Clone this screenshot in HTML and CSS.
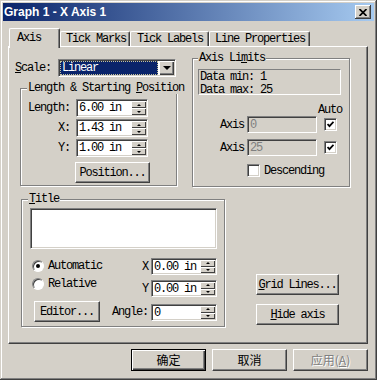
FILE: index.html
```html
<!DOCTYPE html>
<html lang="en">

<head>
    <meta charset="UTF-8">
    <meta name="viewport" content="width=device-width, initial-scale=1.0">
    <title>Graph 1 - X Axis 1</title>
    <link rel="stylesheet" href="styles.css">
</head>

<body>
    <div class="window">
        <div class="titlebar">
            <span class="title-text">Graph 1 - X Axis 1</span>
            <button class="close-btn">
                <svg width="8" height="7" viewBox="0 0 8 7"><path d="M0.5 0 L7.5 7 M7.5 0 L0.5 7" /></svg>
            </button>
        </div>

        <div class="tabs">
            <div class="tab active">Axis</div>
            <div class="tab tab-marks">Tick Marks</div>
            <div class="tab tab-labels">Tick Labels</div>
            <div class="tab tab-line">Line Properties</div>
        </div>

        <div class="panel">
            <div class="top-section">
                <div class="left-col">
                    <div class="scale-row">
                        <span class="scale-label"><u>S</u>cale:</span>
                        <div class="combo">
                            <span class="combo-value">Linear</span>
                            <span class="combo-btn"><span class="arrow-down"></span></span>
                        </div>
                    </div>

                    <div class="group length-group">
                        <div class="group-title">Length &amp; Starting <u>P</u>osition</div>
                        <div class="pos-grid">
                            <span class="pos-label">Length:</span>
                            <div class="spin-field w72">
                                <input class="field-input" type="text" value="6.00 in">
                                <span class="spin"><span class="spin-btn spin-up"></span><span class="spin-btn spin-down"></span></span>
                            </div>
                            <span class="pos-label">X:</span>
                            <div class="spin-field w72">
                                <input class="field-input" type="text" value="1.43 in">
                                <span class="spin"><span class="spin-btn spin-up"></span><span class="spin-btn spin-down"></span></span>
                            </div>
                            <span class="pos-label">Y:</span>
                            <div class="spin-field w72">
                                <input class="field-input" type="text" value="1.00 in">
                                <span class="spin"><span class="spin-btn spin-up"></span><span class="spin-btn spin-down"></span></span>
                            </div>
                        </div>
                        <button class="btn position-btn">Position...</button>
                    </div>
                </div>

                <div class="group limits-group">
                    <div class="group-title limits-title">Axis Li<u>m</u>its</div>
                    <div class="data-box">
                        <div>Data min: 1</div>
                        <div>Data max: 25</div>
                    </div>
                    <div class="auto-label">Auto</div>
                    <div class="limit-row">
                        <span class="limit-label">Axis</span>
                        <input class="field disabled-field" type="text" value="0" disabled>
                        <span class="check"><svg width="7" height="7" viewBox="0 0 7 7"><path d="M0.5 3 L2.5 5.2 L6.5 0.8" /></svg></span>
                    </div>
                    <div class="limit-row second">
                        <span class="limit-label">Axis</span>
                        <input class="field disabled-field" type="text" value="25" disabled>
                        <span class="check"><svg width="7" height="7" viewBox="0 0 7 7"><path d="M0.5 3 L2.5 5.2 L6.5 0.8" /></svg></span>
                    </div>
                    <div class="descending-row">
                        <span class="check"></span>
                        <span>Descending</span>
                    </div>
                </div>
            </div>

            <div class="bottom-section">
                <div class="group title-group">
                    <div class="group-title"><u>T</u>itle</div>
                    <textarea class="title-text-area"></textarea>
                    <div class="title-opts">
                        <div class="radios">
                            <div class="radio-row"><span class="radio checked"></span><span>Automatic</span></div>
                            <div class="radio-row"><span class="radio"></span><span>Relative</span></div>
                        </div>
                        <div class="offsets">
                            <div class="offset-row">
                                <span class="offset-label">X</span>
                                <div class="spin-field w66">
                                    <input class="field-input" type="text" value="0.00 in">
                                    <span class="spin"><span class="spin-btn spin-up"></span><span class="spin-btn spin-down"></span></span>
                                </div>
                            </div>
                            <div class="offset-row">
                                <span class="offset-label">Y</span>
                                <div class="spin-field w66">
                                    <input class="field-input" type="text" value="0.00 in">
                                    <span class="spin"><span class="spin-btn spin-up"></span><span class="spin-btn spin-down"></span></span>
                                </div>
                            </div>
                        </div>
                    </div>
                    <div class="editor-row">
                        <button class="btn editor-btn">Editor...</button>
                        <span class="angle-label">Angle:</span>
                        <div class="spin-field w66 angle-field">
                            <input class="field-input" type="text" value="0">
                            <span class="spin"><span class="spin-btn spin-up"></span><span class="spin-btn spin-down"></span></span>
                        </div>
                    </div>
                </div>

                <div class="side-buttons">
                    <button class="btn side-btn"><u>G</u>rid Lines...</button>
                    <button class="btn side-btn"><u>H</u>ide axis</button>
                </div>
            </div>
        </div>

        <div class="footer">
            <button class="btn footer-btn default-btn">确定</button>
            <button class="btn footer-btn">取消</button>
            <button class="btn footer-btn disabled-btn" disabled>应用(<u>A</u>)</button>
        </div>
    </div>
</body>

</html>
```

FILE: styles.css
```css
* {
    box-sizing: border-box;
}

body {
    margin: 0;
    background-color: #d4d0c8;
    font-family: "Liberation Mono", "Noto Sans CJK SC", monospace;
    font-size: 12px;
    line-height: 12px;
    letter-spacing: -1.2px;
    color: black;
}

u {
    text-underline-offset: 1px;
}

.window {
    width: 377px;
    height: 380px;
    padding: 3px;
    background-color: #d4d0c8;
    box-shadow: inset -1px -1px #404040, inset 1px 1px #d4d0c8, inset -2px -2px #808080, inset 2px 2px #fff;
}

/* title bar */

.titlebar {
    display: flex;
    align-items: center;
    justify-content: space-between;
    height: 18px;
    padding: 0 3px 0 1px;
    background: linear-gradient(to right, #0a246a, #a6caf0);
}

.title-text {
    font-family: "Liberation Sans", Arial, sans-serif;
    font-size: 12px;
    font-weight: bold;
    letter-spacing: 0;
    color: white;
}

.close-btn {
    display: flex;
    align-items: center;
    justify-content: center;
    width: 16px;
    height: 14px;
    padding: 0;
    border: none;
    background-color: #d4d0c8;
    box-shadow: inset -1px -1px #404040, inset 1px 1px #fff, inset -2px -2px #808080;
}

.close-btn svg {
    stroke: black;
    stroke-width: 1.7;
}

/* tabs */

.tabs {
    display: flex;
    align-items: flex-end;
    height: 18px;
    margin: 7px 0 0 6px;
}

.tab {
    height: 15px;
    padding: 1px 0 0 5px;
    border-top: 1px solid #fff;
    border-left: 1px solid #fff;
    border-right: 1px solid #404040;
    border-radius: 2px 2px 0 0;
    box-shadow: inset -1px 0 #808080;
    white-space: nowrap;
}

.tab.active {
    position: relative;
    width: 51px;
    height: 20px;
    margin-bottom: -2px;
    padding: 3px 0 0 7px;
    background-color: #d4d0c8;
}

.tab-marks {
    width: 70px;
}

.tab-labels {
    width: 79px;
    padding-left: 6px;
}

.tab-line {
    width: 101px;
}

.panel {
    width: 360px;
    height: 298px;
    margin-left: 5px;
    border: 1px solid;
    border-color: #fff #404040 #404040 #fff;
    box-shadow: inset -1px -1px #808080;
}

/* shared controls */

.group {
    border: 1px solid #808080;
    box-shadow: inset 1px 1px #fff, 1px 1px #fff;
}

.group-title {
    width: fit-content;
    margin: -7px 0 0 6px;
    padding: 0 1px;
    background-color: #d4d0c8;
    white-space: nowrap;
}

.combo,
.spin-field,
.field,
.check,
.title-text-area {
    border: 1px solid;
    border-color: #808080 #fff #fff #808080;
    box-shadow: inset 1px 1px #404040, inset -1px -1px #d4d0c8;
}

.btn {
    padding: 0;
    font: inherit;
    letter-spacing: inherit;
    color: black;
    background-color: #d4d0c8;
    border: 1px solid;
    border-color: #fff #404040 #404040 #fff;
    box-shadow: inset -1px -1px #808080;
}

.spin-field {
    display: flex;
    height: 18px;
    padding: 1px;
    background-color: white;
}

.w72 {
    width: 72px;
}

.w66 {
    width: 66px;
    height: 17px;
}

.field-input {
    flex: 1;
    min-width: 0;
    padding: 0 0 0 1px;
    border: none;
    outline: none;
    background: transparent;
    font: inherit;
    letter-spacing: inherit;
    color: black;
}

.spin {
    display: flex;
    flex-direction: column;
    width: 15px;
}

.spin-btn {
    flex: 1;
    display: flex;
    align-items: center;
    justify-content: center;
    background-color: #d4d0c8;
    box-shadow: inset 1px 1px #fff, inset -1px -1px #404040;
}

.spin-btn::after {
    content: "";
    border-left: 2px solid transparent;
    border-right: 2px solid transparent;
}

.spin-up::after {
    border-bottom: 2px solid black;
}

.spin-down::after {
    border-top: 2px solid black;
}

.check {
    display: flex;
    align-items: center;
    justify-content: center;
    width: 13px;
    height: 13px;
    background-color: white;
}

.check svg {
    fill: none;
    stroke: black;
    stroke-width: 1.8;
}

/* top section */

.top-section {
    display: flex;
    align-items: flex-start;
    margin-top: 11px;
}

.left-col {
    width: 183px;
}

.scale-row {
    display: flex;
    align-items: center;
    height: 18px;
    margin: 1px 0 0 6px;
}

.scale-label {
    width: 43px;
}

.combo {
    display: flex;
    width: 118px;
    height: 18px;
    padding: 1px;
    background-color: white;
}

.combo-value {
    display: flex;
    align-items: center;
    flex: 1;
    margin-right: 1px;
    padding-left: 1px;
    border: 1px dotted #c6c39a;
    background-color: #0a246a;
    color: white;
}

.combo-btn {
    display: flex;
    align-items: center;
    justify-content: center;
    width: 15px;
    background-color: #d4d0c8;
    box-shadow: inset 1px 1px #fff, inset -1px -1px #404040, inset -2px -2px #808080;
}

.arrow-down {
    border-left: 4px solid transparent;
    border-right: 4px solid transparent;
    border-top: 4px solid black;
}

.length-group {
    width: 157px;
    height: 98px;
    margin: 11px 0 0 11px;
}

.pos-grid {
    display: grid;
    grid-template-columns: 49px 72px;
    grid-auto-rows: 18px;
    column-gap: 6px;
    row-gap: 2px;
    align-items: center;
    margin-top: 5px;
}

.pos-label {
    text-align: right;
}

.position-btn {
    width: 75px;
    height: 21px;
    margin: 5px 0 0 54px;
}

.limits-group {
    width: 158px;
    height: 129px;
}

.limits-title {
    margin-left: 5px;
}

.data-box {
    width: 143px;
    height: 26px;
    margin: 5px 0 0 5px;
    padding: 1px 0 0 1px;
    line-height: 13px;
    border: 1px solid;
    border-color: #808080 #fff #fff #808080;
}

.auto-label {
    margin: 9px 0 0 125px;
}

.limit-row {
    display: flex;
    align-items: center;
    height: 17px;
    margin-left: 27px;
}

.limit-row.second {
    margin-top: 6px;
}

.limit-label {
    width: 27px;
}

.field {
    width: 70px;
    height: 17px;
    margin-right: 7px;
    padding: 0 0 0 2px;
    font: inherit;
    letter-spacing: inherit;
}

.disabled-field {
    background-color: #d4d0c8;
    color: #808080;
}

.descending-row {
    display: flex;
    align-items: center;
    gap: 4px;
    margin: 8px 0 0 54px;
}

/* bottom section */

.bottom-section {
    display: flex;
    align-items: flex-start;
    margin-top: 12px;
}

.title-group {
    width: 204px;
    height: 128px;
    margin-left: 12px;
}

.title-text-area {
    display: block;
    width: 187px;
    height: 41px;
    margin: 3px 0 0 8px;
    padding: 0;
    resize: none;
    outline: none;
    background-color: white;
    font: inherit;
}

.title-opts {
    display: flex;
    margin: 9px 0 0 10px;
}

.radios {
    display: flex;
    flex-direction: column;
    gap: 4px;
    width: 110px;
    padding-top: 1px;
}

.radio-row {
    display: flex;
    align-items: center;
    gap: 4px;
    height: 14px;
}

.radio {
    display: flex;
    align-items: center;
    justify-content: center;
    width: 12px;
    height: 12px;
    border: 1px solid;
    border-color: #808080 #fff #fff #808080;
    border-radius: 50%;
    background-color: white;
    box-shadow: inset 1px 1px #404040;
}

.radio.checked::after {
    content: "";
    width: 4px;
    height: 4px;
    border-radius: 50%;
    background-color: black;
}

.offsets {
    display: flex;
    flex-direction: column;
    gap: 5px;
}

.offset-row {
    display: flex;
    align-items: center;
}

.offset-label {
    width: 9px;
}

.editor-row {
    display: flex;
    align-items: flex-start;
    margin: 4px 0 0 12px;
}

.editor-btn {
    width: 66px;
    height: 21px;
}

.angle-label {
    margin: 5px 0 0 12px;
}

.angle-field {
    margin: 3px 0 0 3px;
}

.side-buttons {
    display: flex;
    flex-direction: column;
    gap: 9px;
    margin: 75px 0 0 31px;
}

.side-btn {
    width: 83px;
    height: 21px;
}

/* footer */

.footer {
    display: flex;
    justify-content: flex-end;
    gap: 6px;
    margin-top: 5px;
    padding-right: 6px;
}

.footer-btn {
    width: 75px;
    height: 22px;
    font-family: "Noto Sans CJK SC", sans-serif;
    font-size: 12px;
    letter-spacing: 0;
}

.default-btn {
    border: 1px solid black;
    box-shadow: inset 1px 1px #fff, inset -1px -1px #404040, inset -2px -2px #808080;
}

.disabled-btn {
    color: #808080;
    text-shadow: 1px 1px #fff;
}
```
